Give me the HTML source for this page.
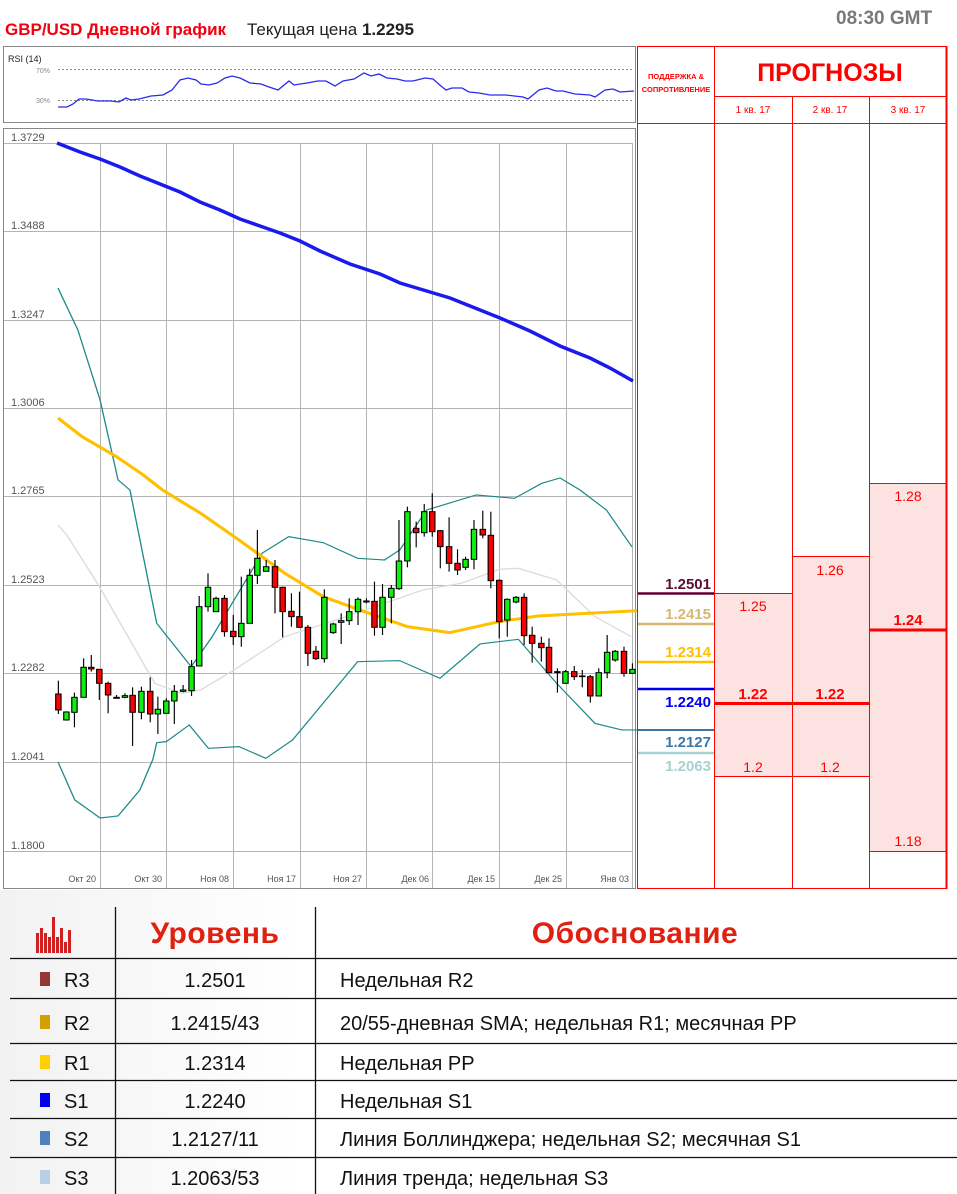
<!DOCTYPE html>
<html><head><meta charset="utf-8"><style>
body{margin:0;width:957px;height:1194px;background:#fff;position:relative;overflow:hidden;font-family:"Liberation Sans","DejaVu Sans",sans-serif}
.a{position:absolute;white-space:nowrap}
</style></head><body>
<div class="a" style="left:5px;top:20px;font-size:17px;font-weight:bold;color:#f00010">GBP/USD Дневной график</div>
<div class="a" style="left:247px;top:20px;font-size:17px;color:#222">Текущая цена <b>1.2295</b></div>
<div class="a" style="left:836px;top:8px;font-size:19px;font-weight:bold;color:#7a7a7a">08:30 GMT</div>

<svg class="a" style="left:0;top:0" width="957" height="895" viewBox="0 0 957 895">
<rect x="3.5" y="46.5" width="632" height="76" fill="#fff" stroke="#888"/>
<text x="8" y="62" font-size="9" fill="#222" font-family="Liberation Sans">RSI (14)</text>
<text x="36" y="73" font-size="7" fill="#888" font-family="Liberation Sans">70%</text>
<text x="36" y="103" font-size="7" fill="#888" font-family="Liberation Sans">30%</text>
<line x1="58" y1="69.5" x2="634" y2="69.5" stroke="#888" stroke-dasharray="2,2"/>
<line x1="58" y1="100.5" x2="634" y2="100.5" stroke="#888" stroke-dasharray="2,2"/>
<polyline fill="none" stroke="#2a2aee" stroke-width="1.3" points="58,107 67,107 73,104 79,99 86,99 98,101 111,101 119,102 126,98 131,100 139,99 151,96 163,95 172,90 180,80 188,78 196,80 201,84 209,85 217,83 225,78 232,76 240,78 250,83 261,84 269,87 278,90 289,81 294,85 307,83 318,81 326,81 335,86 343,81 354,79 364,73 371,76 379,74 387,78 397,79 405,81 413,81 425,78 433,79 441,86 446,90 452,88 462,88 469,92 479,93 490,95 506,95 523,97 528,99 539,90 547,88 556,91 563,91 575,94 590,95 595,97 605,90 613,89 620,92 634,91"/>
<rect x="3.5" y="128.5" width="632" height="760" fill="#fff" stroke="#888"/>
<g stroke="#b4b4b4" stroke-width="1">
<line x1="4" y1="143.5" x2="632" y2="143.5"/><line x1="4" y1="231.5" x2="632" y2="231.5"/><line x1="4" y1="320.5" x2="632" y2="320.5"/><line x1="4" y1="408.5" x2="632" y2="408.5"/><line x1="4" y1="496.5" x2="632" y2="496.5"/><line x1="4" y1="585.5" x2="632" y2="585.5"/><line x1="4" y1="673.5" x2="632" y2="673.5"/><line x1="4" y1="762.5" x2="632" y2="762.5"/><line x1="4" y1="851.5" x2="632" y2="851.5"/>
<line x1="100.5" y1="143" x2="100.5" y2="888"/><line x1="166.5" y1="143" x2="166.5" y2="888"/><line x1="233.5" y1="143" x2="233.5" y2="888"/><line x1="300.5" y1="143" x2="300.5" y2="888"/><line x1="366.5" y1="143" x2="366.5" y2="888"/><line x1="432.5" y1="143" x2="432.5" y2="888"/><line x1="499.5" y1="143" x2="499.5" y2="888"/><line x1="566.5" y1="143" x2="566.5" y2="888"/><line x1="632.5" y1="143" x2="632.5" y2="888"/>
</g>
<g font-size="11" fill="#555" font-family="Liberation Sans">
<text x="11" y="141">1.3729</text><text x="11" y="229">1.3488</text><text x="11" y="318">1.3247</text><text x="11" y="406">1.3006</text><text x="11" y="494">1.2765</text><text x="11" y="583">1.2523</text><text x="11" y="671">1.2282</text><text x="11" y="760">1.2041</text><text x="11" y="849">1.1800</text>
</g>
<g font-size="9" fill="#555" font-family="Liberation Sans" text-anchor="end">
<text x="96" y="882">Окт 20</text><text x="162" y="882">Окт 30</text><text x="229" y="882">Ноя 08</text><text x="296" y="882">Ноя 17</text><text x="362" y="882">Ноя 27</text><text x="429" y="882">Дек 06</text><text x="495" y="882">Дек 15</text><text x="562" y="882">Дек 25</text><text x="629" y="882">Янв 03</text>
</g>
<polyline fill="none" stroke="#1a1aee" stroke-width="3.5" points="57,143 80,152 100,159 120,167 140,176 160,184 180,192 200,202 220,210 240,219 260,226 280,233 300,241 320,251 350,264 380,274 400,283 430,292 450,298 470,306 500,318 530,331 560,346 590,358 610,368 633,381"/>
<g transform="translate(40,490) scale(0.3827,0.3333)">
<polyline fill="none" stroke="#ddd" stroke-width="4" points="47,105 70,135 150,280 300,580 370,610 420,600 500,545 640,440 800,380 900,340 1000,300 1100,280 1200,238 1250,235 1350,270 1450,380 1545,440"/>
<polyline fill="none" stroke="#208a8a" stroke-width="3.5" points="47,-606 99,-480 157,-270 204,-30 235,0 305,400 395,530 450,440 580,190 650,140 740,158 830,205 900,210 940,180 1010,60 1140,15 1240,25 1311,-20 1359,-36 1411,0 1480,60 1547,171"/>
<polyline fill="none" stroke="#208a8a" stroke-width="3.5" points="47,816 91,930 157,984 204,978 261,900 295,808 305,758 330,755 390,705 440,775 520,770 590,805 660,750 830,515 940,512 1045,565 1150,462 1250,448 1350,580 1450,700 1520,720 1560,720"/>
<polyline fill="none" stroke="#ffc000" stroke-width="9" points="47,-216 110,-160 200,-100 270,-45 320,0 420,70 520,150 640,250 740,320 860,370 960,410 1070,428 1200,395 1300,378 1560,362"/>
<g stroke="#000" stroke-width="3">
<line x1="48" y1="572" x2="48" y2="672"/><rect x="41" y="612" width="14" height="48" fill="#f00"/>
<line x1="69" y1="664" x2="69" y2="692"/><rect x="62" y="666" width="14" height="24" fill="#1e1"/>
<line x1="90" y1="608" x2="90" y2="712"/><rect x="83" y="622" width="14" height="45" fill="#1e1"/>
<line x1="114" y1="505" x2="114" y2="622"/><rect x="107" y="532" width="14" height="90" fill="#1e1"/>
<line x1="134" y1="495" x2="134" y2="545"/><rect x="127" y="532" width="14" height="5" fill="#f00"/>
<line x1="155" y1="538" x2="155" y2="630"/><rect x="148" y="538" width="14" height="42" fill="#f00"/>
<line x1="178" y1="575" x2="178" y2="670"/><rect x="171" y="580" width="14" height="35" fill="#f00"/>
<line x1="200" y1="615" x2="200" y2="625"/><rect x="193" y="622" width="14" height="3" fill="#f00"/>
<line x1="222" y1="610" x2="222" y2="625"/><rect x="215" y="617" width="14" height="5" fill="#1e1"/>
<line x1="242" y1="592" x2="242" y2="768"/><rect x="235" y="616" width="14" height="51" fill="#f00"/>
<line x1="265" y1="590" x2="265" y2="688"/><rect x="258" y="604" width="14" height="63" fill="#1e1"/>
<line x1="288" y1="562" x2="288" y2="697"/><rect x="281" y="604" width="14" height="68" fill="#f00"/>
<line x1="308" y1="620" x2="308" y2="732"/><rect x="301" y="658" width="14" height="14" fill="#1e1"/>
<line x1="330" y1="625" x2="330" y2="670"/><rect x="323" y="633" width="14" height="37" fill="#1e1"/>
<line x1="351" y1="585" x2="351" y2="702"/><rect x="344" y="604" width="14" height="29" fill="#1e1"/>
<line x1="374" y1="585" x2="374" y2="607"/><rect x="367" y="600" width="14" height="4" fill="#1e1"/>
<line x1="396" y1="510" x2="396" y2="618"/><rect x="389" y="530" width="14" height="72" fill="#1e1"/>
<line x1="416" y1="318" x2="416" y2="528"/><rect x="409" y="350" width="14" height="178" fill="#1e1"/>
<line x1="439" y1="250" x2="439" y2="365"/><rect x="432" y="292" width="14" height="58" fill="#1e1"/>
<line x1="460" y1="320" x2="460" y2="365"/><rect x="453" y="325" width="14" height="40" fill="#1e1"/>
<line x1="482" y1="315" x2="482" y2="440"/><rect x="475" y="325" width="14" height="100" fill="#f00"/>
<line x1="505" y1="375" x2="505" y2="465"/><rect x="498" y="424" width="14" height="16" fill="#f00"/>
<line x1="526" y1="260" x2="526" y2="470"/><rect x="519" y="400" width="14" height="40" fill="#1e1"/>
<line x1="548" y1="236" x2="548" y2="400"/><rect x="541" y="256" width="14" height="144" fill="#1e1"/>
<line x1="568" y1="120" x2="568" y2="282"/><rect x="561" y="205" width="14" height="51" fill="#1e1"/>
<line x1="591" y1="210" x2="591" y2="244"/><rect x="584" y="230" width="14" height="14" fill="#1e1"/>
<line x1="614" y1="210" x2="614" y2="370"/><rect x="607" y="230" width="14" height="62" fill="#f00"/>
<line x1="634" y1="290" x2="634" y2="442"/><rect x="627" y="292" width="14" height="73" fill="#f00"/>
<line x1="657" y1="310" x2="657" y2="410"/><rect x="650" y="364" width="14" height="16" fill="#f00"/>
<line x1="678" y1="305" x2="678" y2="412"/><rect x="671" y="380" width="14" height="32" fill="#f00"/>
<line x1="700" y1="405" x2="700" y2="528"/><rect x="693" y="412" width="14" height="78" fill="#f00"/>
<line x1="721" y1="468" x2="721" y2="510"/><rect x="714" y="484" width="14" height="22" fill="#f00"/>
<line x1="743" y1="298" x2="743" y2="518"/><rect x="736" y="322" width="14" height="184" fill="#1e1"/>
<line x1="766" y1="398" x2="766" y2="432"/><rect x="759" y="402" width="14" height="26" fill="#1e1"/>
<line x1="787" y1="370" x2="787" y2="462"/><rect x="780" y="392" width="14" height="5" fill="#1e1"/>
<line x1="808" y1="325" x2="808" y2="405"/><rect x="801" y="365" width="14" height="27" fill="#1e1"/>
<line x1="831" y1="322" x2="831" y2="405"/><rect x="824" y="328" width="14" height="37" fill="#1e1"/>
<line x1="853" y1="325" x2="853" y2="340"/><rect x="846" y="333" width="14" height="3" fill="#1e1"/>
<line x1="874" y1="275" x2="874" y2="437"/><rect x="867" y="334" width="14" height="78" fill="#f00"/>
<line x1="895" y1="282" x2="895" y2="435"/><rect x="888" y="322" width="14" height="90" fill="#1e1"/>
<line x1="918" y1="285" x2="918" y2="400"/><rect x="911" y="295" width="14" height="27" fill="#1e1"/>
<line x1="938" y1="90" x2="938" y2="300"/><rect x="931" y="213" width="14" height="83" fill="#1e1"/>
<line x1="960" y1="50" x2="960" y2="232"/><rect x="953" y="65" width="14" height="148" fill="#1e1"/>
<line x1="983" y1="95" x2="983" y2="172"/><rect x="976" y="115" width="14" height="13" fill="#f00"/>
<line x1="1004" y1="42" x2="1004" y2="140"/><rect x="997" y="65" width="14" height="63" fill="#1e1"/>
<line x1="1025" y1="10" x2="1025" y2="140"/><rect x="1018" y="65" width="14" height="60" fill="#f00"/>
<line x1="1046" y1="120" x2="1046" y2="235"/><rect x="1039" y="122" width="14" height="48" fill="#f00"/>
<line x1="1069" y1="82" x2="1069" y2="245"/><rect x="1062" y="170" width="14" height="50" fill="#f00"/>
<line x1="1091" y1="178" x2="1091" y2="255"/><rect x="1084" y="220" width="14" height="20" fill="#f00"/>
<line x1="1112" y1="200" x2="1112" y2="240"/><rect x="1105" y="208" width="14" height="24" fill="#1e1"/>
<line x1="1134" y1="90" x2="1134" y2="238"/><rect x="1127" y="118" width="14" height="90" fill="#1e1"/>
<line x1="1157" y1="62" x2="1157" y2="145"/><rect x="1150" y="118" width="14" height="17" fill="#f00"/>
<line x1="1178" y1="65" x2="1178" y2="295"/><rect x="1171" y="136" width="14" height="136" fill="#f00"/>
<line x1="1200" y1="268" x2="1200" y2="445"/><rect x="1193" y="271" width="14" height="124" fill="#f00"/>
<line x1="1221" y1="325" x2="1221" y2="440"/><rect x="1214" y="328" width="14" height="62" fill="#1e1"/>
<line x1="1244" y1="318" x2="1244" y2="340"/><rect x="1237" y="322" width="14" height="14" fill="#1e1"/>
<line x1="1265" y1="310" x2="1265" y2="465"/><rect x="1258" y="322" width="14" height="115" fill="#f00"/>
<line x1="1286" y1="410" x2="1286" y2="518"/><rect x="1279" y="436" width="14" height="24" fill="#f00"/>
<line x1="1310" y1="440" x2="1310" y2="515"/><rect x="1303" y="460" width="14" height="13" fill="#f00"/>
<line x1="1330" y1="445" x2="1330" y2="550"/><rect x="1323" y="472" width="14" height="76" fill="#f00"/>
<line x1="1352" y1="535" x2="1352" y2="608"/><rect x="1345" y="545" width="14" height="3" fill="#1e1"/>
<line x1="1373" y1="540" x2="1373" y2="582"/><rect x="1366" y="545" width="14" height="35" fill="#1e1"/>
<line x1="1396" y1="528" x2="1396" y2="570"/><rect x="1389" y="545" width="14" height="15" fill="#f00"/>
<line x1="1417" y1="540" x2="1417" y2="592"/><rect x="1410" y="558" width="14" height="2" fill="#f00"/>
<line x1="1438" y1="555" x2="1438" y2="638"/><rect x="1431" y="560" width="14" height="58" fill="#f00"/>
<line x1="1460" y1="535" x2="1460" y2="618"/><rect x="1453" y="548" width="14" height="70" fill="#1e1"/>
<line x1="1482" y1="435" x2="1482" y2="565"/><rect x="1475" y="487" width="14" height="61" fill="#1e1"/>
<line x1="1503" y1="480" x2="1503" y2="515"/><rect x="1496" y="484" width="14" height="26" fill="#1e1"/>
<line x1="1526" y1="470" x2="1526" y2="560"/><rect x="1519" y="484" width="14" height="66" fill="#f00"/>
<line x1="1548" y1="520" x2="1548" y2="552"/><rect x="1541" y="538" width="14" height="12" fill="#1e1"/>
</g>
</g>

<rect x="714" y="593" width="155" height="183" fill="#fde2e2"/>
<rect x="792" y="556" width="77" height="37" fill="#fde2e2"/>
<rect x="869" y="483" width="78" height="368" fill="#fde2e2"/>
<g stroke="#f00" stroke-width="1" fill="none">
<rect x="637.5" y="46.5" width="309" height="842"/>
<line x1="714.5" y1="46" x2="714.5" y2="888"/>
<line x1="792.5" y1="96" x2="792.5" y2="888"/>
<line x1="869.5" y1="96" x2="869.5" y2="888"/>
<line x1="714" y1="96.5" x2="947" y2="96.5"/>
<line x1="637" y1="123.5" x2="947" y2="123.5"/>
<line x1="714" y1="593.5" x2="792" y2="593.5"/>
<line x1="792" y1="556.5" x2="869" y2="556.5"/>
<line x1="869" y1="483.5" x2="947" y2="483.5"/>
<line x1="714" y1="776.5" x2="869" y2="776.5"/>
<line x1="869" y1="851.5" x2="947" y2="851.5"/>
<line x1="946.5" y1="46" x2="946.5" y2="889" stroke-width="2"/>
</g>
<line x1="714" y1="703.5" x2="869" y2="703.5" stroke="#f00" stroke-width="3"/>
<line x1="869" y1="630" x2="947" y2="630" stroke="#f00" stroke-width="3"/>
<g font-family="Liberation Sans" fill="#f00" text-anchor="middle">
<text x="676" y="79" font-size="7.5" font-weight="bold">ПОДДЕРЖКА &amp;</text>
<text x="676" y="92" font-size="7.5" font-weight="bold">СОПРОТИВЛЕНИЕ</text>
<text x="830" y="81" font-size="25" font-weight="bold">ПРОГНОЗЫ</text>
<text x="753" y="113" font-size="10">1 кв. 17</text>
<text x="830" y="113" font-size="10">2 кв. 17</text>
<text x="908" y="113" font-size="10">3 кв. 17</text>
<text x="753" y="611" font-size="14">1.25</text>
<text x="830" y="575" font-size="14">1.26</text>
<text x="908" y="501" font-size="14">1.28</text>
<text x="753" y="699" font-size="15" font-weight="bold">1.22</text>
<text x="830" y="699" font-size="15" font-weight="bold">1.22</text>
<text x="908" y="625" font-size="15" font-weight="bold">1.24</text>
<text x="753" y="772" font-size="14">1.2</text>
<text x="830" y="772" font-size="14">1.2</text>
<text x="908" y="846" font-size="14">1.18</text>
</g>
<g font-family="Liberation Sans" font-weight="bold" font-size="15" text-anchor="end">
<text x="711" y="589" fill="#5a0f30">1.2501</text>
<text x="711" y="619" fill="#d8b870">1.2415</text>
<text x="711" y="657" fill="#ffc000">1.2314</text>
<text x="711" y="707" fill="#0000ee">1.2240</text>
<text x="711" y="747" fill="#3a78a8">1.2127</text>
<text x="711" y="771" fill="#a8d2d2">1.2063</text>
</g>
<line x1="638" y1="593.5" x2="714" y2="593.5" stroke="#600030" stroke-width="2.5"/>
<line x1="638" y1="624" x2="714" y2="624" stroke="#d8b870" stroke-width="2.5"/>
<line x1="638" y1="662" x2="714" y2="662" stroke="#ffc000" stroke-width="2.5"/>
<line x1="638" y1="689" x2="714" y2="689" stroke="#0000ee" stroke-width="2.5"/>
<line x1="638" y1="730" x2="714" y2="730" stroke="#3a78a8" stroke-width="2"/>
<line x1="638" y1="753" x2="714" y2="753" stroke="#a8d2d2" stroke-width="2.5"/>
</svg>

<div class="a" style="left:0;top:890px;width:300px;height:304px;background:linear-gradient(90deg,#f2f2f2,#fff)"></div>
<svg class="a" style="left:0;top:890px" width="957" height="304">
<g fill="#d02020">
<rect x="36" y="43" width="3" height="20"/><rect x="40" y="38" width="3" height="25"/><rect x="44" y="43" width="3" height="20"/><rect x="48" y="47" width="3" height="16"/><rect x="52" y="27" width="3" height="36"/><rect x="56" y="47" width="3" height="16"/><rect x="60" y="38" width="3" height="25"/><rect x="64" y="52" width="3" height="11"/><rect x="68" y="40" width="3" height="23"/>
</g>
<g stroke="#111" stroke-width="1.3">
<line x1="115.5" y1="17" x2="115.5" y2="304"/><line x1="315.5" y1="17" x2="315.5" y2="304"/>
<line x1="10" y1="68.5" x2="957" y2="68.5"/><line x1="10" y1="108.5" x2="957" y2="108.5"/><line x1="10" y1="153.5" x2="957" y2="153.5"/><line x1="10" y1="190.5" x2="957" y2="190.5"/><line x1="10" y1="228.5" x2="957" y2="228.5"/><line x1="10" y1="267.5" x2="957" y2="267.5"/>
</g>
<g font-family="Liberation Sans" font-weight="bold" font-size="30" fill="#e02010" text-anchor="middle">
<text x="215" y="53" letter-spacing="0.5">Уровень</text><text x="635" y="53" letter-spacing="0.5">Обоснование</text>
</g>
<rect x="40" y="82" width="10" height="14" fill="#953735"/>
<rect x="40" y="125" width="10" height="14" fill="#d4a000"/>
<rect x="40" y="165" width="10" height="14" fill="#ffd000"/>
<rect x="40" y="203" width="10" height="14" fill="#0000ee"/>
<rect x="40" y="241" width="10" height="14" fill="#4f81bd"/>
<rect x="40" y="280" width="10" height="14" fill="#b8cfe6"/>
<g font-family="Liberation Sans" font-size="20" fill="#111">
<text x="64" y="97">R3</text><text x="64" y="140">R2</text><text x="64" y="180">R1</text><text x="64" y="218">S1</text><text x="64" y="256">S2</text><text x="64" y="295">S3</text>
<g text-anchor="middle"><text x="215" y="97">1.2501</text><text x="215" y="140">1.2415/43</text><text x="215" y="180">1.2314</text><text x="215" y="218">1.2240</text><text x="215" y="256">1.2127/11</text><text x="215" y="295">1.2063/53</text></g>
<text x="340" y="97">Недельная R2</text>
<text x="340" y="140">20/55-дневная SMA; недельная R1; месячная PP</text>
<text x="340" y="180">Недельная PP</text>
<text x="340" y="218">Недельная S1</text>
<text x="340" y="256">Линия Боллинджера; недельная S2; месячная S1</text>
<text x="340" y="295">Линия тренда; недельная S3</text>
</g>
</svg>
</body></html>
